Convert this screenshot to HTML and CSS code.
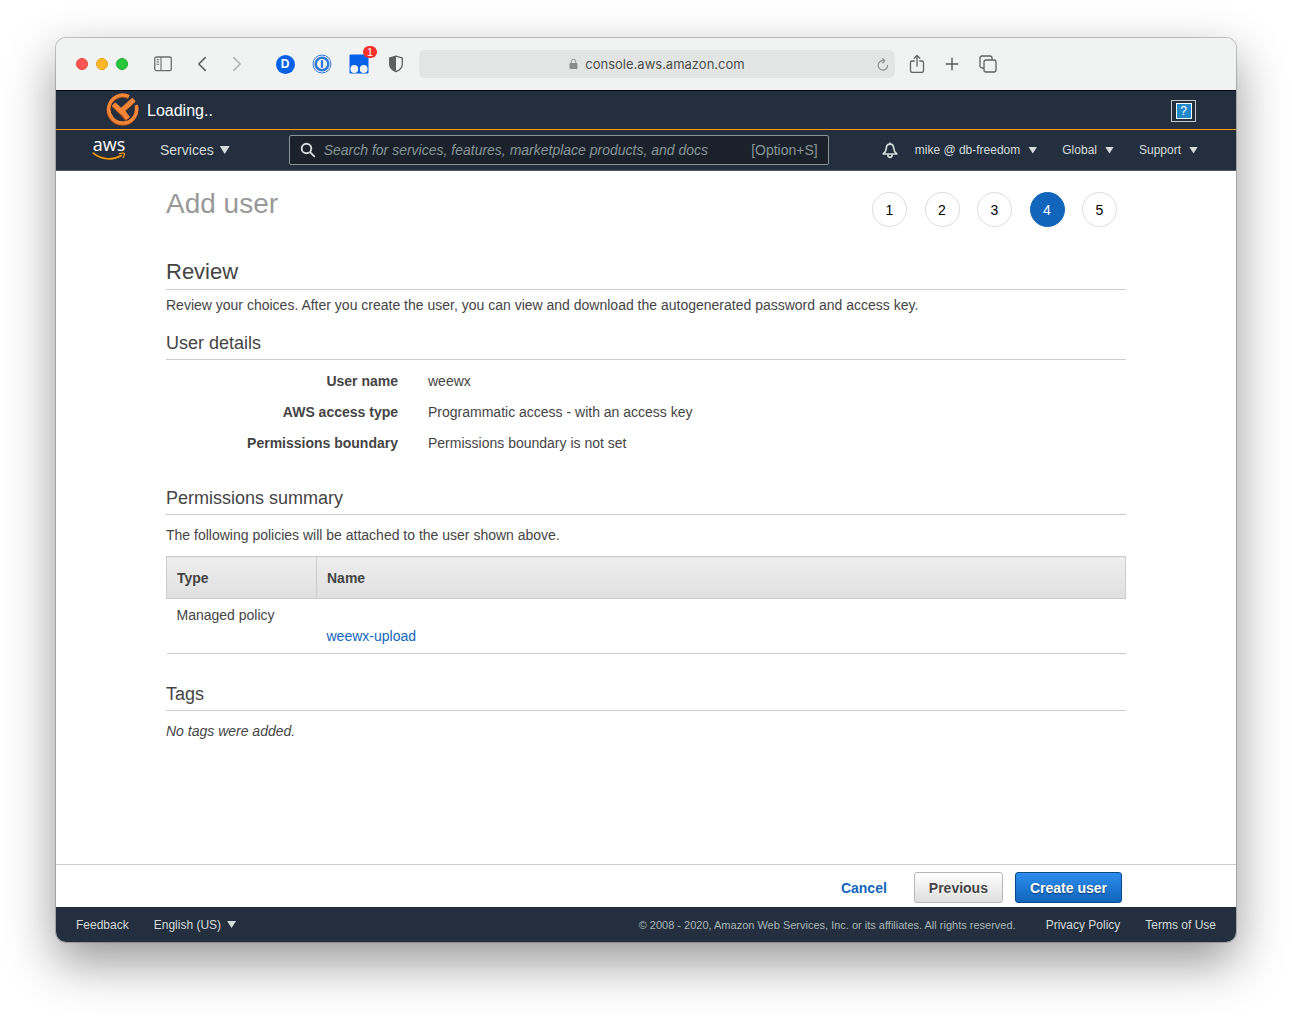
FILE: index.html
```
<!DOCTYPE html>
<html lang="en">
<head>
    <meta charset="UTF-8">
    <meta name="viewport" content="width=device-width, initial-scale=1.0">
    <title>Add user</title>
    <link rel="stylesheet" href="styles.css">
</head>
<body>
    <div class="window">
        <!-- browser toolbar -->
        <div class="toolbar">
            <div class="lights">
                <span class="light red"></span>
                <span class="light yellow"></span>
                <span class="light green"></span>
            </div>
            <button class="tool sidebar" aria-label="Sidebar">
                <svg width="18" height="16" viewBox="0 0 18 16" fill="none" stroke="#6c6d6c" stroke-width="1.3"><rect x="0.7" y="1" width="16.6" height="13.6" rx="1.6"/><path d="M7 1v13.6M2.5 3.8h2.6M2.5 6h2.6M2.5 8.2h2.6" stroke-width="1.1"/></svg>
            </button>
            <button class="tool back" aria-label="Back">
                <svg width="10" height="16" viewBox="0 0 10 16" fill="none" stroke="#5b5c5b" stroke-width="1.6" stroke-linecap="round" stroke-linejoin="round"><path d="M8.2 1.6 1.8 8l6.4 6.4"/></svg>
            </button>
            <button class="tool forward" aria-label="Forward">
                <svg width="10" height="16" viewBox="0 0 10 16" fill="none" stroke="#b4b5b4" stroke-width="1.6" stroke-linecap="round" stroke-linejoin="round"><path d="M1.8 1.6 8.2 8l-6.4 6.4"/></svg>
            </button>
            <div class="extensions">
                <button class="tool" aria-label="D"><span class="ext-d">D</span></button>
                <button class="tool" aria-label="Passwords">
                    <svg width="20" height="20" viewBox="0 0 20 20" fill="none" stroke="#3079dc"><circle cx="10" cy="10" r="9" stroke-width="1"/><circle cx="10" cy="10" r="6.3" stroke-width="2.6"/><path d="M10 6.2v7.6" stroke-width="2.3"/></svg>
                </button>
                <button class="tool ext-badge" aria-label="Scripts">
                    <svg width="20" height="20" viewBox="0 0 20 20"><rect x="0.5" y="0.5" width="19" height="19" rx="1" fill="#0562e8"/><circle cx="5.3" cy="15" r="3.9" fill="#f1f3f2"/><circle cx="14.7" cy="15" r="3.9" fill="#f1f3f2"/></svg>
                    <span class="badge">1</span>
                </button>
                <button class="tool" aria-label="Privacy report">
                    <svg width="16" height="18" viewBox="0 0 16 18"><path d="M8 1.2 14.3 3v6.2c0 3.2-2.7 5.8-6.3 7.4C4.4 15 1.7 12.4 1.7 9.2V3z" fill="none" stroke="#5f605f" stroke-width="1.3"/><path d="M8 1.2v15.4C4.4 15 1.7 12.4 1.7 9.2V3z" fill="#5f605f"/></svg>
                </button>
            </div>
            <div class="address">
                <div class="url">
                    <svg width="9" height="12" viewBox="0 0 9 12"><rect x="0.5" y="5" width="8" height="6" rx="1" fill="#8b8c8b"/><path d="M2.3 5V3.4a2.2 2.2 0 0 1 4.4 0V5" fill="none" stroke="#a1a2a1" stroke-width="1.1"/></svg>
                    <span>console.aws.amazon.com</span>
                </div>
                <button class="tool" aria-label="Reload">
                    <svg width="12" height="13" viewBox="0 0 12 13" fill="none" stroke="#8f908f" stroke-width="1.2" stroke-linecap="round"><path d="M10.6 7.4A4.7 4.7 0 1 1 6 2.7h1.6M5.7.8l2.1 1.9-2 2.1"/></svg>
                </button>
            </div>
            <div class="page-tools">
                <button class="tool" aria-label="Share">
                    <svg width="16" height="20" viewBox="0 0 16 20" fill="none" stroke="#616261" stroke-width="1.3" stroke-linecap="round" stroke-linejoin="round"><path d="M5.2 7h-2C2 7 1.5 7.5 1.5 8.7v8c0 1.2.5 1.7 1.7 1.7h9.6c1.2 0 1.7-.5 1.7-1.7v-8c0-1.2-.5-1.7-1.7-1.7h-2M8 12V1.6M5.2 4.3 8 1.5l2.8 2.8"/></svg>
                </button>
                <button class="tool" aria-label="New tab">
                    <svg width="14" height="14" viewBox="0 0 14 14" stroke="#5b5c5b" stroke-width="1.4" stroke-linecap="round"><path d="M7 1.2v11.6M1.2 7h11.6"/></svg>
                </button>
                <button class="tool" aria-label="Tabs">
                    <svg width="18" height="18" viewBox="0 0 18 18" fill="none" stroke="#616261" stroke-width="1.3" stroke-linejoin="round"><rect x="5" y="5" width="12" height="12" rx="2"/><path d="M5 13H3a2 2 0 0 1-2-2V3a2 2 0 0 1 2-2h8a2 2 0 0 1 2 2v2"/></svg>
                </button>
            </div>
        </div>

        <!-- loading strip -->
        <div class="loading-bar">
            <svg width="34" height="34" viewBox="0 0 34 34" fill="none">
                <path d="M23.5 4.500A14 14 0 1 0 31 14" stroke="#a5501c" stroke-width="3.600"/>
                <path d="M24 3.500A14 14 0 1 0 31.200 12" stroke="#f58536" stroke-width="3.400"/>
                <path d="M8.500 12l7.500 7L28.500 7.500M16 19l6.500 7.500" stroke="#a5501c" stroke-width="5"/>
                <path d="M8.500 11l7.500 7L29 6.500M16.500 17l6.500 8.500" stroke="#f58536" stroke-width="5"/>
            </svg>
            <span>Loading..</span>
            <button class="help" aria-label="Help"><span>?</span></button>
        </div>

        <!-- main navigation -->
        <nav class="nav">
            <a class="logo" href="#">
                <span>aws</span>
                <svg width="34" height="10" viewBox="0 0 34 10" fill="none" stroke="#f90" stroke-linecap="round" stroke-linejoin="round"><path d="M1.2 2.2C9.500 8.800 21 9.600 29.2 4.6" stroke-width="1.7"/><path d="M27.500 2.600c3.700-.9 5.300-.6 5 .5-.2 1.300-.7 2.300-1.500 3.500" stroke-width="1.200"/></svg>
            </a>
            <button class="menu services">Services <i class="caret"></i></button>
            <label class="search">
                <svg width="16" height="16" viewBox="0 0 16 16" fill="none" stroke="#d5dbdb" stroke-width="1.9" stroke-linecap="round"><circle cx="6.5" cy="6.5" r="4.8"/><path d="m10.3 10.3 4 4"/></svg>
                <input type="search" aria-label="Search" placeholder="Search for services, features, marketplace products, and docs">
                <span>[Option+S]</span>
            </label>
            <div class="nav-right">
                <button class="menu" aria-label="Notifications">
                    <svg width="16" height="17" viewBox="0 0 16 17" fill="none" stroke="#d5dbdb" stroke-width="1.7" stroke-linejoin="round"><path d="M8 2.2c-2.3 0-3.6 1.6-3.7 4C4.2 8.7 3.5 10 1.2 12h13.600c-2.3-2-3-3.3-3.1-5.8-.1-2.4-1.4-4-3.7-4zM8 .5v1.700M5.800 12.500c0 3.800 4.400 3.800 4.400 0"/></svg>
                </button>
                <button class="menu">mike @ db-freedom <i class="caret"></i></button>
                <button class="menu">Global <i class="caret"></i></button>
                <button class="menu">Support <i class="caret"></i></button>
            </div>
        </nav>

        <main class="content">
            <div class="page">
                <div class="page-head">
                    <h1>Add user</h1>
                    <ol class="steps">
                        <li>1</li>
                        <li>2</li>
                        <li>3</li>
                        <li class="active">4</li>
                        <li>5</li>
                    </ol>
                </div>

                <h2>Review</h2>
                <p class="intro">Review your choices. After you create the user, you can view and download the autogenerated password and access key.</p>

                <h3>User details</h3>
                <dl class="details">
                    <dt>User name</dt>
                    <dd>weewx</dd>
                    <dt>AWS access type</dt>
                    <dd>Programmatic access - with an access key</dd>
                    <dt>Permissions boundary</dt>
                    <dd>Permissions boundary is not set</dd>
                </dl>

                <h3>Permissions summary</h3>
                <p>The following policies will be attached to the user shown above.</p>
                <table class="policies">
                    <thead>
                        <tr><th class="type">Type</th><th>Name</th></tr>
                    </thead>
                    <tbody>
                        <tr><td>Managed policy</td><td class="name"><a href="#">weewx-upload</a></td></tr>
                    </tbody>
                </table>

                <h3>Tags</h3>
                <p><em>No tags were added.</em></p>
            </div>
        </main>

        <div class="actions">
            <a class="cancel" href="#">Cancel</a>
            <button class="btn">Previous</button>
            <button class="btn primary">Create user</button>
        </div>

        <footer class="footer">
            <a href="#">Feedback</a>
            <button class="menu">English (US) <i class="caret"></i></button>
            <small>© 2008 - 2020, Amazon Web Services, Inc. or its affiliates. All rights reserved.</small>
            <a href="#">Privacy Policy</a>
            <a href="#">Terms of Use</a>
        </footer>
    </div>
</body>
</html>
```
FILE: styles.css
```
* { box-sizing: border-box; }
body { margin: 0; padding: 38px 56px 74px; height: 100vh; background: #fff; color: #444; font: 14px/20px "Liberation Sans", Arial, sans-serif; }
button { margin: 0; padding: 0; border: 0; background: none; color: inherit; font: inherit; }
a { color: #1166bb; text-decoration: none; }
svg { display: block; flex: none; }
h1, h2, h3, p, dl, dd, ol { margin: 0; padding: 0; font-weight: normal; }

.window { display: flex; flex-direction: column; height: 100%; border-radius: 10px; overflow: hidden; background: #fff; box-shadow: 0 0 0 1px rgba(0, 0, 0, 0.2), 0 20px 50px rgba(0, 0, 0, 0.42); }

/* toolbar */
.toolbar { display: flex; align-items: center; height: 53px; padding: 0 20px; background: #f1f3f2; border-bottom: 1px solid #020811; }
.lights { display: flex; gap: 8px; }
.light { width: 12px; height: 12px; border-radius: 50%; }
.red { background: #fe5650; border: 1px solid #e2463f; }
.yellow { background: #fdb827; border: 1px solid #e0a01f; }
.green { background: #27c840; border: 1px solid #1dad2b; }
.tool { display: flex; align-items: center; justify-content: center; }
.sidebar { margin-left: 26px; }
.back { margin-left: 25px; }
.forward { margin-left: 25px; }
.extensions { display: flex; align-items: center; gap: 17px; margin-left: 33px; }
.extensions .tool { width: 20px; height: 20px; }
.ext-d { width: 19px; height: 19px; border-radius: 50%; background: #0562e8; color: #fff; font-size: 12px; font-weight: bold; line-height: 19px; }
.ext-badge { position: relative; }
.badge { position: absolute; top: -8px; right: -8px; width: 14px; height: 12px; border-radius: 6px; background: #f9302b; color: #fff; font-size: 11px; line-height: 12px; text-align: center; }
.address { display: flex; align-items: center; width: 476px; height: 28px; margin-left: 13px; padding: 0 6px 0 18px; border-radius: 6px; background: #e3e5e4; }
.url { display: flex; flex: 1; align-items: center; justify-content: center; gap: 7px; color: #4c4d4c; font: 13px/20px Inter, sans-serif; }
.page-tools { display: flex; align-items: center; gap: 20px; margin-left: 14px; }

/* loading strip */
.loading-bar { display: flex; align-items: center; height: 39px; padding: 0 40px 0 49px; background: #232f3e; border-bottom: 1px solid #f90; color: #fff; font-size: 16px; }
.loading-bar > span { margin-left: 8px; line-height: 22px; padding-top: 2px; }
.help { display: flex; align-items: center; justify-content: center; width: 25px; height: 22px; margin: 2px 0 0 auto; border: 1px solid #c5c9cc; }
.help span { width: 16px; height: 16px; border: 1px solid #fff; background: #2389c9; color: #fff; font-size: 12px; line-height: 14px; }

/* navigation */
.nav { display: flex; align-items: center; height: 41px; padding: 0 38px 0 36px; background: #232f3e; border-bottom: 1px solid #545b64; color: #d5dbdb; }
.menu { display: flex; align-items: center; gap: 8px; white-space: nowrap; }
.caret { width: 9px; height: 7px; background: currentColor; clip-path: polygon(0 0, 100% 0, 50% 100%); }
.logo { display: flex; flex-direction: column; align-items: center; width: 34px; padding-bottom: 3px; color: #fff; font: 18px/14px "Open Sans", sans-serif; }
.services { margin-left: 34px; gap: 6px; }
.services .caret { width: 10px; height: 8px; }
.search { display: flex; align-items: center; width: 540px; height: 30px; margin-left: 59px; padding: 0 10px; border: 1px solid #879596; border-radius: 2px; background: #1a212b; color: #879596; }
.search input { flex: 1; min-width: 0; height: 26px; margin-left: 8px; padding: 0; border: 0; outline: 0; background: none; color: #fff; font: italic 14px/20px "Liberation Sans", Arial, sans-serif; }
.search input::placeholder { color: #879596; }
.nav-right { display: flex; gap: 25px; margin-left: auto; font-size: 12px; }
.nav-right .menu:first-child { margin-right: -8px; }

/* page */
.content { flex: 1; min-height: 0; overflow: hidden; }
.page { max-width: 960px; margin: 0 auto; }
.page-head { display: flex; justify-content: space-between; padding: 15px 9px 0 0; height: 84px; }
h1 { color: #999; font-size: 28px; line-height: 36px; }
.steps { display: flex; justify-content: space-between; width: 245px; margin-top: 6px; list-style: none; color: #000; }
.steps li { width: 35px; height: 35px; border: 1px solid #ddd; border-radius: 50%; line-height: 34px; text-align: center; }
.steps .active { border-color: #1166bb; background: #1166bb; color: #fff; }
h2 { border-bottom: 1px solid #ccc; font-size: 22px; line-height: 34px; }
.intro { padding: 5px 0 0; }
h3 { margin-top: 15px; padding-bottom: 2px; border-bottom: 1px solid #ccc; font-size: 18px; line-height: 27px; }
h3 + p { margin-top: 10px; }
.details { display: grid; grid-template-columns: 232px 1fr; gap: 11px 30px; margin: 11px 0 32px; }
.details dt { font-weight: bold; text-align: right; }
.policies { width: 100%; margin: 11px 0 27px; border-collapse: collapse; text-align: left; }
.policies th { height: 42px; padding: 0 10px; border: 1px solid #ccc; background: linear-gradient(#eee, #e0e0e0); }
.policies .type { width: 150px; }
.policies td { padding: 6px 10px 7px; border-bottom: 1px solid #ccc; vertical-align: top; }
.policies .name { padding-top: 27px; }

/* actions */
.actions { display: flex; align-items: center; justify-content: flex-end; height: 43px; padding: 3px 114px 0 0; border-top: 1px solid #ccc; font-weight: bold; }
.btn { height: 31px; margin-left: 12px; padding: 0 14px; border: 1px solid #b8b8b8; border-radius: 3px; background: linear-gradient(#fff, #ddd); text-shadow: 0 1px 0 #fff; }
.cancel { margin-right: 15px; }
.btn.primary { border-color: #0a4a8c; background: linear-gradient(#2d8cec, #1166bb); color: #fff; text-shadow: 0 1px 1px #0a3a70; }

/* footer */
.footer { display: flex; align-items: center; gap: 25px; height: 35px; padding: 0 20px; background: #232f3e; color: #d5dbdb; font-size: 12px; }
.footer a { color: #d5dbdb; }
.footer .menu { gap: 6px; }
.footer small { margin: 0 5px 0 auto; color: #aab7b8; font-size: 11px; }
```
